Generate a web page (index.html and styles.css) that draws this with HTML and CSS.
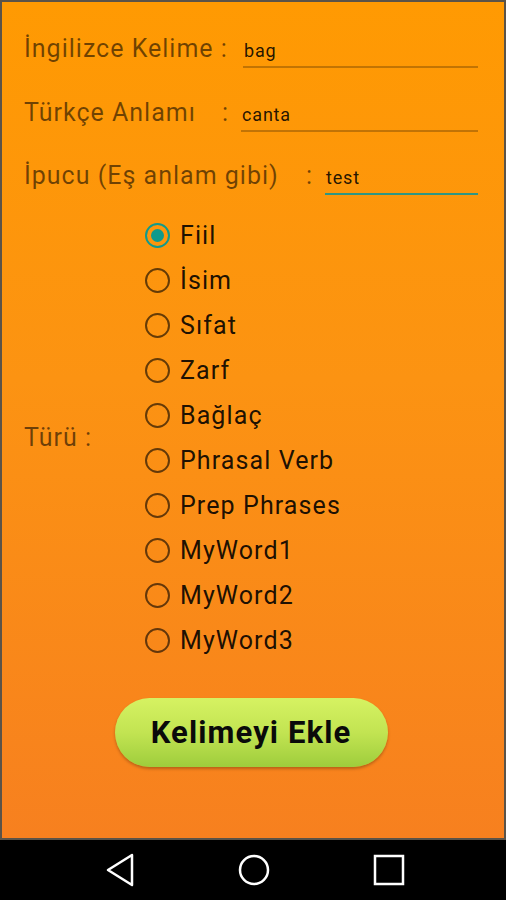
FILE: index.html
```html
<!DOCTYPE html>
<html lang="tr">
<head>
  <meta charset="UTF-8">
  <meta name="viewport" content="width=device-width, initial-scale=1.0">
  <title>Kelime Ekle</title>
  <link rel="stylesheet" href="styles.css">
</head>
<body>
  <div class="screen">
    <div class="row row-en">
      <span class="label">İngilizce Kelime :</span>
      <div class="field"><span>bag</span></div>
    </div>
    <div class="row row-tr">
      <span class="label">Türkçe Anlamı</span>
      <span class="colon">:</span>
      <div class="field"><span>canta</span></div>
    </div>
    <div class="row row-hint">
      <span class="label">İpucu (Eş anlam gibi)</span>
      <span class="colon">:</span>
      <div class="field active"><span>test</span></div>
    </div>

    <div class="type-group">
      <span class="label type-label">Türü :</span>
      <ul class="radios">
        <li class="radio checked"><span class="dot"></span>Fiil</li>
        <li class="radio"><span class="dot"></span>İsim</li>
        <li class="radio"><span class="dot"></span>Sıfat</li>
        <li class="radio"><span class="dot"></span>Zarf</li>
        <li class="radio"><span class="dot"></span>Bağlaç</li>
        <li class="radio"><span class="dot"></span>Phrasal Verb</li>
        <li class="radio"><span class="dot"></span>Prep Phrases</li>
        <li class="radio"><span class="dot"></span>MyWord1</li>
        <li class="radio"><span class="dot"></span>MyWord2</li>
        <li class="radio"><span class="dot"></span>MyWord3</li>
      </ul>
    </div>

    <div class="actions">
      <button type="button" class="add-btn">Kelimeyi Ekle</button>
    </div>
  </div>

  <!-- android navigation bar -->
  <div class="navbar">
    <svg class="nav-back" width="30" height="34" viewBox="0 0 30 34"><path d="M27 2 L3 17 L27 32 Z" fill="none" stroke="#fff" stroke-width="2.5" stroke-linejoin="round"/></svg>
    <svg width="32" height="32" viewBox="0 0 32 32"><circle cx="16" cy="16" r="14" fill="none" stroke="#fff" stroke-width="2.5"/></svg>
    <svg width="32" height="32" viewBox="0 0 32 32"><rect x="2" y="2" width="28" height="28" fill="none" stroke="#fff" stroke-width="2.5"/></svg>
  </div>
</body>
</html>
```

FILE: styles.css
```css
* {
  box-sizing: border-box;
}

body {
  margin: 0;
  width: 506px;
  height: 900px;
  font-family: Roboto, "Noto Sans", sans-serif;
  background-color: #000;
  overflow: hidden;
}

.screen {
  height: 840px;
  border: 2px solid #5b5348;
  background: linear-gradient(to bottom, #ff9a02 0%, #fc9312 45%, #f7801f 100%);
  padding: 32px 26px 0 22px;
}

.row {
  display: flex;
  align-items: baseline;
  height: 63.5px;
}

.label,
.colon {
  font-size: 25px;
  letter-spacing: 1px;
  color: rgba(0, 0, 0, 0.56);
  white-space: nowrap;
}

.row-en .label {
  width: 219px;
}

.row-tr .label {
  width: 198px;
}

.row-hint .label {
  width: 282px;
}

.row-tr .field {
  margin-left: 12px;
}

.row-hint .field {
  margin-left: 12px;
}

.field {
  flex: 1;
  font-size: 18px;
  letter-spacing: 0.8px;
  color: rgba(0, 0, 0, 0.87);
  padding: 0 0 5px 1px;
  border-bottom: 2px solid rgba(0, 0, 0, 0.24);
}

.field.active {
  border-bottom-color: #2f9683;
}

.type-group {
  display: flex;
  align-items: center;
  margin-top: -12px;
}

.type-label {
  width: 121px;
}

.radios {
  list-style: none;
  margin: 0;
  padding: 0;
}

.radio {
  display: flex;
  align-items: center;
  height: 45px;
  font-size: 25px;
  letter-spacing: 1.1px;
  color: rgba(0, 0, 0, 0.9);
}

.dot {
  width: 25px;
  height: 25px;
  border: 2px solid rgba(0, 0, 0, 0.6);
  border-radius: 50%;
  margin-right: 10px;
  display: flex;
  align-items: center;
  justify-content: center;
}

.radio.checked .dot {
  border-color: #0f9a8c;
}

.radio.checked .dot::after {
  content: "";
  width: 13px;
  height: 13px;
  border-radius: 50%;
  background-color: #0f9a8c;
}

.actions {
  display: flex;
  justify-content: center;
  margin-top: 35px;
}

.add-btn {
  width: 273px;
  height: 69px;
  border: none;
  border-radius: 35px;
  background: linear-gradient(to bottom, #d6f262 0%, #c2e452 50%, #9ecd3c 100%);
  box-shadow: 0 2px 3px rgba(0, 0, 0, 0.25);
  font-family: Roboto, "Noto Sans", sans-serif;
  font-weight: bold;
  font-size: 31px;
  letter-spacing: 1.1px;
  color: #0a0a0a;
  cursor: pointer;
}

.navbar {
  height: 60px;
  background-color: #000;
  display: flex;
  align-items: center;
  justify-content: center;
  gap: 103px;
}

.nav-back {
  margin-left: 4px;
}
```
